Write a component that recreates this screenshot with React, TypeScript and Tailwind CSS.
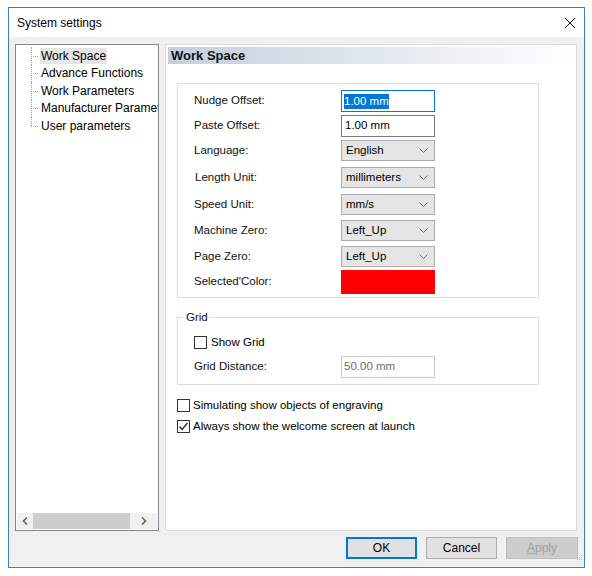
import React from 'react';

const font = { fontFamily: '"Liberation Sans", Arial, sans-serif' };

const Chevron = () => (
  <svg width="9" height="6" viewBox="0 0 9 6" className="shrink-0">
    <polyline points="0.5,0.5 4.5,4.5 8.5,0.5" fill="none" stroke="#6d6d6d" strokeWidth="1" />
  </svg>
);

const Select: React.FC<{ value: string }> = ({ value }) => (
  <div className="w-[94px] h-[21px] bg-[#e5e5e5] border border-[#adadad] flex items-center justify-between pl-[4px] pr-[6px] text-black">
    <span>{value}</span>
    <Chevron />
  </div>
);

const CheckBox: React.FC<{ checked?: boolean }> = ({ checked }) => (
  <div className="w-[13px] h-[13px] border border-[#333333] bg-white flex items-center justify-center shrink-0">
    {checked && (
      <svg width="11" height="11" viewBox="0 0 11 11">
        <polyline points="1.5,5.5 4,8.5 9.5,2" fill="none" stroke="#222" strokeWidth="1.2" />
      </svg>
    )}
  </div>
);

const TreeItem: React.FC<{ label: string; selected?: boolean; last?: boolean }> = ({ label, selected, last }) => (
  <div className="flex items-center h-[17.5px] relative">
    <div className="w-[9px] shrink-0 relative h-full">
      <div
        className={`absolute left-[0px] top-0 border-l border-dotted border-[#a0a0a0] ${last ? 'h-1/2' : 'h-full'}`}
      />
      <div className="absolute left-[0px] top-1/2 w-[7px] border-t border-dotted border-[#a0a0a0]" />
    </div>
    <span className={`whitespace-nowrap px-[1px] leading-[16px] ${selected ? 'bg-[#e5e5e5]' : ''}`}>{label}</span>
  </div>
);

const rows: { label: string; kind: 'input' | 'focus' | 'select' | 'color'; value?: string; mt: string; shift?: boolean }[] = [
  { label: 'Nudge Offset:', kind: 'focus', value: '1.00 mm', mt: 'mt-[6px]' },
  { label: 'Paste Offset:', kind: 'input', value: '1.00 mm', mt: 'mt-[3px]' },
  { label: 'Language:', kind: 'select', value: 'English', mt: 'mt-[3px]' },
  { label: 'Length Unit:', kind: 'select', value: 'millimeters', mt: 'mt-[6px]', shift: true },
  { label: 'Speed Unit:', kind: 'select', value: 'mm/s', mt: 'mt-[6px]' },
  { label: 'Machine Zero:', kind: 'select', value: 'Left_Up', mt: 'mt-[5px]' },
  { label: 'Page Zero:', kind: 'select', value: 'Left_Up', mt: 'mt-[5px]' },
  { label: "Selected'Color:", kind: 'color', mt: 'mt-[3px]' },
];

export default function App() {
  return (
    <div className="w-[592px] h-[576px] bg-white pt-[7px] pl-[8px]" style={font}>
      <div className="w-[577px] h-[561px] border border-[#3a7fc0] bg-[#f0f0f0] flex flex-col text-[11.5px] text-black">
        {/* title bar */}
        <div className="h-[29px] bg-white flex items-center justify-between pl-[8px] pr-[8px] shrink-0">
          <span className="text-[12px]">System settings</span>
          <svg width="12" height="12" viewBox="0 0 12 12">
            <path d="M1 1 L11 11 M11 1 L1 11" stroke="#111" strokeWidth="1" />
          </svg>
        </div>

        {/* body */}
        <div className="flex pl-[6px] pt-[7px] gap-[6px] h-[494px]">
          {/* tree */}
          <div className="w-[144px] h-[487px] border border-[#828790] bg-white flex flex-col">
            <div className="flex-1 overflow-hidden pl-[15px] pt-[2px] text-[12px]">
              <TreeItem label="Work Space" selected />
              <TreeItem label="Advance Functions" />
              <TreeItem label="Work Parameters" />
              <TreeItem label="Manufacturer Parameters" />
              <TreeItem label="User parameters" last />
            </div>
            <div className="h-[16px] bg-[#f0f0f0] flex items-center mb-[1px] mx-[1px]">
              <div className="w-[16px] flex justify-center">
                <svg width="6" height="8" viewBox="0 0 6 8">
                  <polyline points="5,0.5 1.5,4 5,7.5" fill="none" stroke="#606060" strokeWidth="1.5" />
                </svg>
              </div>
              <div className="w-[97px] h-[16px] bg-[#cdcdcd]" />
              <div className="flex-1 flex justify-center">
                <svg width="6" height="8" viewBox="0 0 6 8">
                  <polyline points="1,0.5 4.5,4 1,7.5" fill="none" stroke="#606060" strokeWidth="1.5" />
                </svg>
              </div>
            </div>
          </div>

          {/* right panel */}
          <div className="w-[412px] h-[487px] bg-white border border-[#dcdcdc] pt-[2px] pl-[2px] pr-[1px]">
            <div className="h-[17px] flex items-center pl-[3px] font-bold text-[13px] bg-gradient-to-r from-[#c3cfdd] to-white text-[#111]">
              Work Space
            </div>

            <div className="ml-[9px] mt-[19px] w-[362px] h-[215px] border border-[#dcdcdc] flex flex-col">
              {rows.map((r) => (
                <div key={r.label} className={`flex items-center ${r.mt}`}>
                  <span className={`w-[163px] shrink-0 text-[#111] ${r.shift ? 'pl-[17px]' : 'pl-[16px]'}`}>{r.label}</span>
                  {r.kind === 'focus' && (
                    <div className="w-[94px] h-[22px] border border-[#0078d7] bg-white flex items-center pl-[2px]">
                      <span className="bg-[#0078d7] text-white leading-[15px]">{r.value}</span>
                    </div>
                  )}
                  {r.kind === 'input' && (
                    <div className="w-[94px] h-[22px] border border-[#7a7a7a] bg-white flex items-center pl-[3px]">
                      {r.value}
                    </div>
                  )}
                  {r.kind === 'select' && <Select value={r.value!} />}
                  {r.kind === 'color' && <div className="w-[94px] h-[24px] bg-[#ff0000]" />}
                </div>
              ))}
            </div>

            <fieldset className="ml-[9px] mt-[11px] w-[362px] h-[76px] border border-[#dcdcdc] pt-[8px]">
              <legend className="ml-[6px] px-[2px] text-[#111]">Grid</legend>
              <div className="flex items-center gap-[4px] pl-[16px]">
                <CheckBox />
                <span>Show Grid</span>
              </div>
              <div className="flex items-center mt-[4px]">
                <span className="w-[163px] shrink-0 pl-[16px] text-[#111]">Grid Distance:</span>
                <div className="w-[94px] h-[22px] border border-[#cccccc] bg-white flex items-center pl-[2px] text-[#6d6d6d]">
                  50.00 mm
                </div>
              </div>
            </fieldset>

            <div className="ml-[9px] mt-[14px] flex flex-col gap-[8px]">
              <div className="flex items-center gap-[3px] h-[13px]">
                <CheckBox />
                <span>Simulating show objects of engraving</span>
              </div>
              <div className="flex items-center gap-[3px] h-[13px]">
                <CheckBox checked />
                <span>Always show the welcome screen at launch</span>
              </div>
            </div>
          </div>
        </div>

        {/* buttons */}
        <div className="flex justify-end gap-[9px] pr-[6px] mt-[6px] relative text-[12px]">
          <div className="w-[71px] h-[22px] border-2 border-[#0078d7] bg-[#e1e1e1] flex items-center justify-center">OK</div>
          <div className="w-[71px] h-[22px] border border-[#adadad] bg-[#e1e1e1] flex items-center justify-center">Cancel</div>
          <div className="w-[72px] h-[22px] border border-[#bfbfbf] bg-[#cccccc] flex items-center justify-center text-[#a0a0a0]">
            <span><span className="underline">A</span>pply</span>
          </div>
          <svg width="8" height="8" viewBox="0 0 8 8" className="absolute right-[1px] top-[18px]">
            <rect x="6" y="0" width="1" height="1" fill="#bbb" />
            <rect x="4" y="2" width="1" height="1" fill="#bbb" />
            <rect x="6" y="2" width="1" height="1" fill="#bbb" />
            <rect x="2" y="4" width="1" height="1" fill="#bbb" />
            <rect x="4" y="4" width="1" height="1" fill="#bbb" />
            <rect x="6" y="4" width="1" height="1" fill="#bbb" />
          </svg>
        </div>
      </div>
    </div>
  );
}
